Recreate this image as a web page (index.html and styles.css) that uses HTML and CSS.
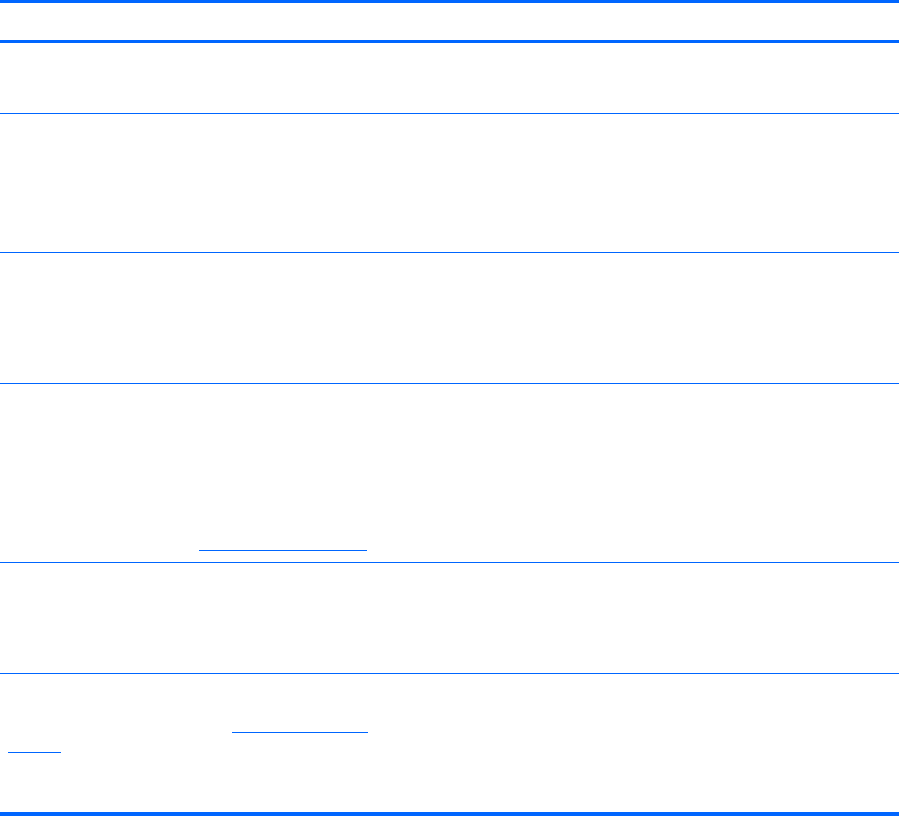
FILE: index.html
```html
<!DOCTYPE html>
<html lang="en">
<head>
<meta charset="utf-8">
<title>Table</title>
<link rel="stylesheet" href="styles.css">
</head>
<body>
<div class="table">
  <div class="row head"></div>
  <div class="row r1"></div>
  <div class="row r2"></div>
  <div class="row r3"></div>
  <div class="row r4">
    <a class="link link-a" href="#"></a>
  </div>
  <div class="row r5"></div>
  <div class="row r6">
    <a class="link link-b" href="#"></a>
    <a class="link link-c" href="#"></a>
  </div>
</div>
</body>
</html>
```

FILE: styles.css
```css
html, body {
  margin: 0;
  padding: 0;
  background: #ffffff;
  font-family: "Liberation Sans", Arial, sans-serif;
}

.table {
  width: 899px;
  display: flex;
  flex-direction: column;
}

.row {
  box-sizing: content-box;
  border-bottom: 1px solid #0066ff;
  display: flex;
  flex-direction: column;
  align-items: flex-start;
}

.head {
  border-top: 3px solid #0066ff;
  border-bottom: 3px solid #0066ff;
  height: 37px;
}

.r1 { height: 70px; }
.r2 { height: 138px; }
.r3 { height: 130px; }
.r4 { height: 178px; }
.r5 { height: 110px; }
.r6 {
  height: 138px;
  border-bottom: 4px solid #0066ff;
}

.link {
  display: block;
  height: 0;
  border-bottom: 1px solid #0066ff;
}

.link-a {
  margin-top: 166px;
  margin-left: 199px;
  width: 168px;
}

.link-b {
  margin-top: 58px;
  margin-left: 232px;
  width: 136px;
}

.link-c {
  margin-top: 19px;
  margin-left: 8px;
  width: 53px;
}
```
